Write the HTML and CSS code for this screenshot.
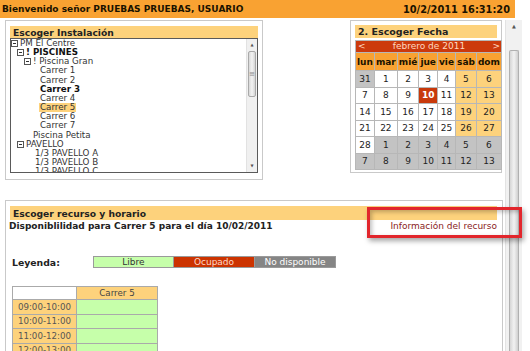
FILE: index.html
```html
<!DOCTYPE html>
<html lang="es">
<head>
    <meta charset="UTF-8">
    <title>Reservas</title>
    <link rel="stylesheet" href="styles.css">
</head>
<body>
    <div class="topbar">
        <span>Bienvenido señor PRUEBAS PRUEBAS, USUARIO</span>
        <span class="fecha-hora">10/2/2011 16:31:20</span>
    </div>

    <div class="frame">
        <div class="content">
            <div class="top-row">
                <div class="panel panel-instalacion">
                    <div class="panel-title">Escoger Instalación</div>
                    <div class="tree-box">
                        <ul class="tree">
                            <li class="lvl0"><span class="nodo"></span>PM El Centre</li>
                            <li class="lvl1 bold"><span class="nodo"></span>! PISCINES</li>
                            <li class="lvl2"><span class="nodo"></span>! Piscina Gran</li>
                            <li class="hoja3">Carrer 1</li>
                            <li class="hoja3">Carrer 2</li>
                            <li class="hoja3 bold">Carrer 3</li>
                            <li class="hoja3">Carrer 4</li>
                            <li class="hoja3"><span class="sel">Carrer 5</span></li>
                            <li class="hoja3">Carrer 6</li>
                            <li class="hoja3">Carrer 7</li>
                            <li class="hoja2">Piscina Petita</li>
                            <li class="lvl1"><span class="nodo"></span>PAVELLO</li>
                            <li class="hoja2b">1/3 PAVELLO A</li>
                            <li class="hoja2b">1/3 PAVELLO B</li>
                            <li class="hoja2b">1/3 PAVELLO C</li>
                        </ul>
                        <div class="mini-scroll">
                            <span class="flecha">&#9650;</span>
                            <span class="mini-thumb">&#8801;</span>
                            <span class="hueco"></span>
                            <span class="flecha">&#9660;</span>
                        </div>
                    </div>
                </div>

                <div class="panel panel-fecha">
                    <div class="panel-title">2. Escoger Fecha</div>
                    <table class="calendario">
                        <tr>
                            <td colspan="7" class="cal-nav"><span>&lt;</span><span>febrero de 2011</span><span>&gt;</span></td>
                        </tr>
                        <tr class="dias">
                            <th>lun</th><th>mar</th><th>mié</th><th>jue</th><th>vie</th><th>sáb</th><th>dom</th>
                        </tr>
                        <tr>
                            <td class="otro">31</td><td>1</td><td>2</td><td>3</td><td>4</td><td class="finde">5</td><td class="finde">6</td>
                        </tr>
                        <tr>
                            <td>7</td><td>8</td><td>9</td><td class="hoy">10</td><td>11</td><td class="finde">12</td><td class="finde">13</td>
                        </tr>
                        <tr>
                            <td>14</td><td>15</td><td>16</td><td>17</td><td>18</td><td class="finde">19</td><td class="finde">20</td>
                        </tr>
                        <tr>
                            <td>21</td><td>22</td><td>23</td><td>24</td><td>25</td><td class="finde">26</td><td class="finde">27</td>
                        </tr>
                        <tr>
                            <td>28</td><td class="otro">1</td><td class="otro">2</td><td class="otro">3</td><td class="otro">4</td><td class="otro">5</td><td class="otro">6</td>
                        </tr>
                        <tr>
                            <td class="otro">7</td><td class="otro">8</td><td class="otro">9</td><td class="otro">10</td><td class="otro">11</td><td class="otro">12</td><td class="otro">13</td>
                        </tr>
                    </table>
                </div>
            </div>

            <div class="panel panel-recurso">
                <div class="panel-title">Escoger recurso y horario</div>
                <div class="disponibilidad">
                    <span class="bold">Disponiblilidad para Carrer 5 para el día 10/02/2011</span>
                    <a class="info-recurso">Información del recurso</a>
                </div>

                <div class="leyenda">
                    <span class="leyenda-label">Leyenda:</span>
                    <span class="ley libre">Libre</span>
                    <span class="ley ocupado">Ocupado</span>
                    <span class="ley nodisp">No disponible</span>
                </div>

                <table class="horario">
                    <tr>
                        <th class="vacio"></th>
                        <th class="recurso">Carrer 5</th>
                    </tr>
                    <tr><td class="hora">09:00-10:00</td><td class="libre"></td></tr>
                    <tr><td class="hora">10:00-11:00</td><td class="libre"></td></tr>
                    <tr><td class="hora">11:00-12:00</td><td class="libre"></td></tr>
                    <tr><td class="hora">12:00-13:00</td><td class="libre"></td></tr>
                </table>
            </div>
        </div>

        <div class="page-scroll">
            <span class="flecha">&#9650;</span>
            <span class="page-thumb"></span>
        </div>
    </div>

    <!-- marca roja de la captura -->
    <div class="marca"></div>
</body>
</html>
```

FILE: styles.css
```css
html, body {
    margin: 0;
    overflow: hidden;
    height: 351px;
}
body {
    font-family: "DejaVu Sans", Verdana, sans-serif;
    font-size: 9px;
    color: #222;
    background: #fff;
    position: relative;
}
.bold {
    font-weight: bold;
}

/* barra superior */
.topbar {
    width: 515px;
    height: 18px;
    box-sizing: border-box;
    padding: 0 5px 0 2px;
    background-color: #f9a232;
    display: flex;
    justify-content: space-between;
    align-items: center;
    font-weight: bold;
    color: #1a1200;
}
.fecha-hora {
    font-size: 9.8px;
}

.frame {
    display: flex;
}
.content {
    width: 505px;
    padding-top: 2px;
}

.top-row {
    display: flex;
    justify-content: space-between;
    align-items: flex-start;
    padding: 0 3px 0 5px;
}

.panel {
    border: 1px solid #c9c9c9;
    box-sizing: border-box;
}
.panel-title {
    background-color: #fdd27c;
    font-weight: bold;
    font-size: 9.2px;
    padding-left: 3px;
    display: flex;
    align-items: center;
}

/* instalacion */
.panel-instalacion {
    width: 258px;
    height: 160px;
    padding: 5px 4px 0 4px;
}
.panel-instalacion .panel-title {
    height: 12px;
}
.tree-box {
    height: 135px;
    box-sizing: border-box;
    border: 1px solid #5a5a5a;
    display: flex;
    background: #fff;
}
.tree {
    list-style: none;
    margin: 0;
    padding: 0;
    flex: 1;
    overflow: hidden;
    font-size: 8.7px;
    line-height: 9.15px;
    color: #333;
}
.tree li {
    white-space: nowrap;
    display: flex;
    align-items: center;
}
.tree li.bold {
    color: #111;
}
.lvl0 { padding-left: 0; }
.lvl1 { padding-left: 6px; }
.lvl2 { padding-left: 13px; }
.hoja3 { padding-left: 29px; }
.hoja2 { padding-left: 22px; }
.hoja2b { padding-left: 24px; }
.nodo {
    display: inline-block;
    width: 7px;
    height: 7px;
    box-sizing: border-box;
    border: 1px solid #555;
    margin-right: 2px;
    position: relative;
    background: #fff;
}
.nodo::after {
    content: "";
    position: absolute;
    left: 1px;
    right: 1px;
    top: 2px;
    height: 1px;
    background: #333;
}
.sel {
    background-color: #fdd27c;
    padding: 0 1px;
    margin-left: -1px;
}
.mini-scroll {
    width: 10px;
    background: #f0f0f0;
    border-left: 1px solid #e2e2e2;
    display: flex;
    flex-direction: column;
    align-items: center;
}
.mini-scroll .flecha {
    font-size: 4px;
    color: #555;
    height: 12px;
    line-height: 12px;
}
.mini-thumb {
    width: 8px;
    height: 46px;
    box-sizing: border-box;
    border: 1px solid #a9a9a9;
    border-radius: 2px;
    background: linear-gradient(to right, #d8d8d8, #f3f3f3 50%, #d4d4d4);
    font-size: 7px;
    color: #888;
    display: flex;
    align-items: center;
    justify-content: center;
}
.hueco {
    flex: 1;
}

/* calendario */
.panel-fecha {
    width: 152px;
    height: 153px;
    padding: 4px 4px 0 4px;
}
.panel-fecha .panel-title {
    height: 13px;
    font-size: 9.5px;
    margin-bottom: 3px;
}
.calendario {
    width: 142px;
    border-collapse: separate;
    border-spacing: 1px;
    background-color: #b7b7b7;
    margin: -1px 0 0 0;
    font-size: 9px;
    text-align: center;
}
.calendario td, .calendario th {
    padding: 0;
    height: 15.5px;
    background: #fff;
    color: #222;
}
.cal-nav {
    text-align: center;
    line-height: 11px;
}
.calendario td.cal-nav {
    height: 11px;
    background-color: #cc3a0c;
    color: #ffd8c0;
}
.cal-nav span {
    display: inline-block;
}
.cal-nav span:first-child {
    float: left;
    padding-left: 2px;
}
.cal-nav span:last-child {
    float: right;
    padding-right: 1px;
}
.calendario .dias th {
    background-color: #f9a232;
    font-weight: bold;
    height: 17px;
    color: #1a1200;
    padding: 0 1px;
}
.calendario td.finde {
    background-color: #fdd27c;
}
.calendario td.otro {
    background-color: #c3c3c3;
}
.calendario td.hoy {
    background-color: #c8390b;
    color: #fff;
    font-weight: bold;
}

/* recurso y horario */
.panel-recurso {
    margin: 20px 2px 0 5px;
    height: 200px;
    padding: 5px 5px 0 4px;
    border-bottom: none;
}
.panel-recurso .panel-title {
    height: 14px;
}
.disponibilidad {
    display: flex;
    justify-content: space-between;
    align-items: center;
    height: 12px;
    margin-left: -1px;
}
.info-recurso {
    color: #8a1c1c;
    font-size: 9px;
}
.leyenda {
    display: flex;
    align-items: center;
    margin-top: 24px;
    padding-left: 2px;
}
.leyenda-label {
    font-weight: bold;
    width: 81px;
    font-size: 9.3px;
}
.ley {
    width: 81px;
    height: 12px;
    box-sizing: border-box;
    border: 1px solid #9a9a9a;
    text-align: center;
    line-height: 10px;
    font-size: 9px;
}
.ley + .ley {
    border-left: none;
}
.ley.libre {
    background-color: #c6ffaa;
    color: #333;
}
.ley.ocupado {
    background-color: #cc3300;
    color: #ffd8c8;
}
.ley.nodisp {
    background-color: #858585;
    color: #fff;
}

.horario {
    margin: 18px 0 0 2px;
    border-collapse: collapse;
    font-size: 8.7px;
    color: #555;
}
.horario th, .horario td {
    border: 1px solid #aaa;
    padding: 0;
    font-weight: normal;
    text-align: center;
}
.horario th {
    height: 12px;
}
.horario td {
    height: 13.5px;
}
.horario .vacio {
    width: 63px;
    background: #fff;
}
.horario .recurso {
    width: 80px;
    background-color: #fdd27c;
    color: #444;
}
.horario .hora {
    background-color: #fdd27c;
}
.horario td.libre {
    background-color: #c6ffaa;
}

/* barra de desplazamiento de la pagina */
.page-scroll {
    width: 16px;
    margin-top: 2px;
    height: 333px;
    background: #f1f1f1;
    border-left: 1px solid #e3e3e3;
    display: flex;
    flex-direction: column;
    align-items: center;
}
.page-scroll .flecha {
    font-size: 5px;
    color: #555;
    height: 30px;
    line-height: 12px;
}
.page-scroll .page-thumb {
    width: 10px;
    flex: 1;
    box-sizing: border-box;
    border: 1px solid #b0b0b0;
    border-bottom: none;
    border-radius: 2px 2px 0 0;
    background: linear-gradient(to right, #d6d6d6, #f2f2f2 50%, #cfcfcf);
}

.marca {
    position: absolute;
    left: 367px;
    top: 207px;
    width: 155px;
    height: 31px;
    box-sizing: border-box;
    border: 3px solid #e2262c;
    box-shadow: 2px 3px 5px rgba(0, 0, 0, 0.35), inset 2px 2px 4px rgba(0, 0, 0, 0.25);
}
```
